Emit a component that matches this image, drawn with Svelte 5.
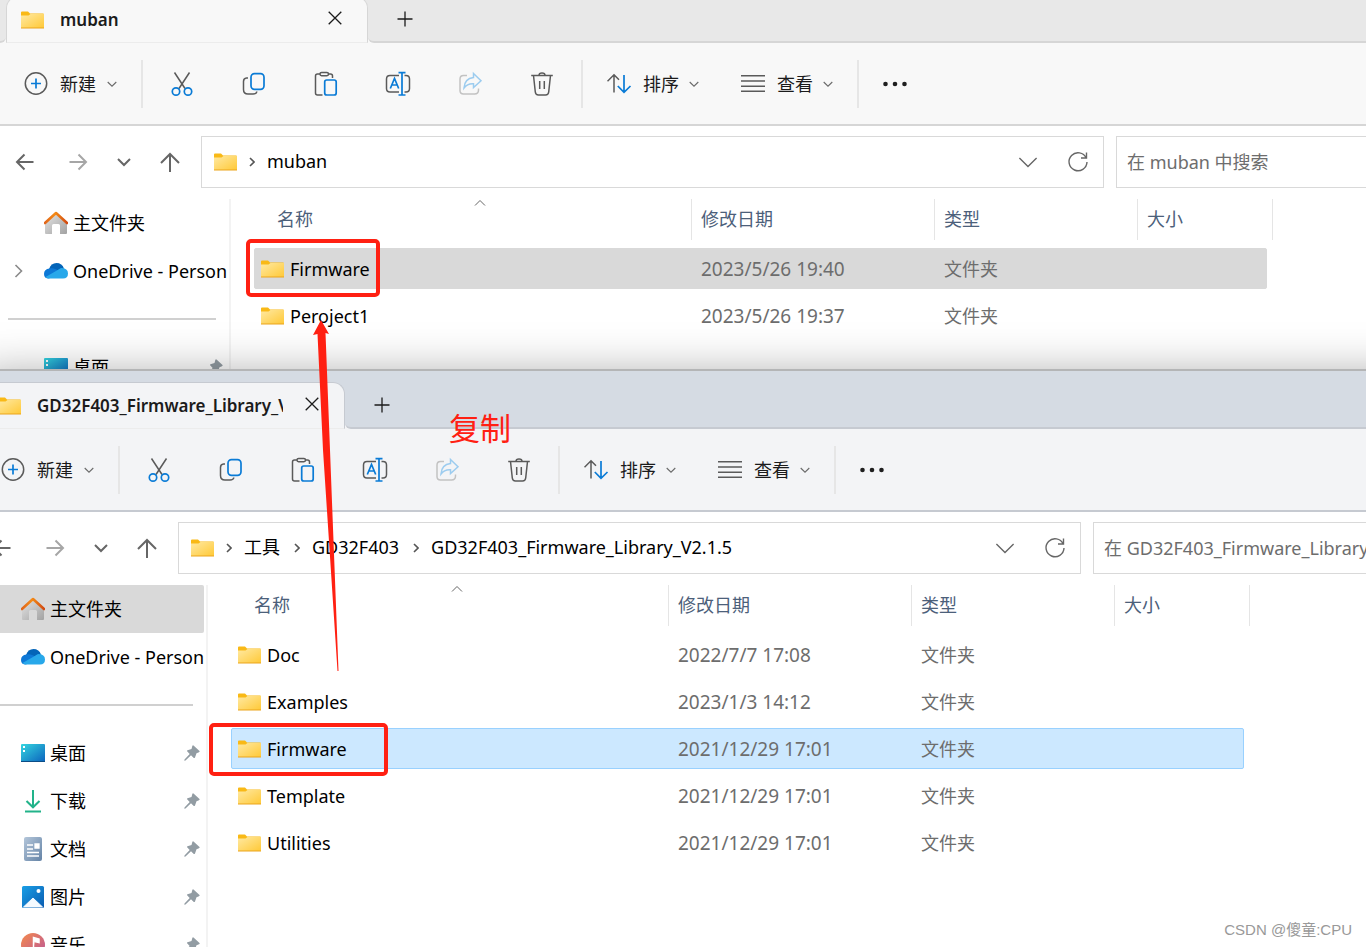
<script lang="ts">
  interface Entry {
    name: string;
    date: string;
    selected?: boolean;
  }

  interface Place {
    icon: string;
    label: string;
  }

  interface ExplorerWindow {
    id: string;
    title: string;
    crumbs: string[];
    search: string;
    active: boolean;
    places: Place[];
    entries: Entry[];
  }

  const pinned: Place[] = [
    { icon: 'desktop', label: '桌面' },
    { icon: 'download', label: '下载' },
    { icon: 'document', label: '文档' },
    { icon: 'picture', label: '图片' },
    { icon: 'music', label: '音乐' }
  ];

  const windows: ExplorerWindow[] = [
    {
      id: 'back',
      title: 'muban',
      crumbs: ['muban'],
      search: '在 muban 中搜索',
      active: false,
      places: pinned.slice(0, 1),
      entries: [
        { name: 'Firmware', date: '2023/5/26 19:40', selected: true },
        { name: 'Peroject1', date: '2023/5/26 19:37' }
      ]
    },
    {
      id: 'front',
      title: 'GD32F403_Firmware_Library_V2.1.5',
      crumbs: ['工具', 'GD32F403', 'GD32F403_Firmware_Library_V2.1.5'],
      search: '在 GD32F403_Firmware_Library_V2.1.5 中搜索',
      active: true,
      places: pinned,
      entries: [
        { name: 'Doc', date: '2022/7/7 17:08' },
        { name: 'Examples', date: '2023/1/3 14:12' },
        { name: 'Firmware', date: '2021/12/29 17:01', selected: true },
        { name: 'Template', date: '2021/12/29 17:01' },
        { name: 'Utilities', date: '2021/12/29 17:01' }
      ]
    }
  ];

  const tools = [
    { icon: 'cut', label: '剪切' },
    { icon: 'copy', label: '复制' },
    { icon: 'paste', label: '粘贴' },
    { icon: 'rename', label: '重命名' },
    { icon: 'share', label: '共享' },
    { icon: 'delete', label: '删除' }
  ];
</script>

{#snippet folder()}
  <svg class="folder" width="23" height="18" viewBox="0 0 23 18">
    <path d="M0 1.5Q0 .5 1 .5H7L9 2.5H22Q23 2.5 23 3.5V9H0z" fill="#f9b916" />
    <path d="M0 4.5H7.5L9.5 3H23V17H0z" fill="url(#folder-fill)" />
    <path d="M0 16.5H23V17.5H0z" fill="#eba51c" />
  </svg>
{/snippet}

{#snippet chevron(size: number)}
  <svg class="chevron" width={size} height={size} viewBox="0 0 10 10">
    <path d="M.7 3L5 7.2L9.3 3" />
  </svg>
{/snippet}

{#snippet toolIcon(name: string)}
  <svg class="tool-icon" width="26" height="26" viewBox="0 0 26 26">
    {#if name === 'new'}
      <circle cx="13" cy="12.5" r="10.7" />
      <path class="blue" d="M13 7.5V17.5M8 12.5H18" />
    {:else if name === 'cut'}
      <path d="M5.5 1.5L16 17.5M20.5 1.5L10 17.5" />
      <circle class="blue" cx="7" cy="20.5" r="3.7" />
      <circle class="blue" cx="19" cy="20.5" r="3.7" />
    {:else if name === 'copy'}
      <path d="M7 7H5.5Q2.5 7.3 2.5 10.5V18.5Q2.5 23 7 23H12Q15.5 23 15.8 20.5" />
      <rect class="blue" x="10" y="2.7" width="13" height="15.6" rx="3.5" />
    {:else if name === 'paste'}
      <path d="M7 3H4.5Q2.5 3 2.5 5V22Q2.5 24 4.5 24H9.5M16 3H17.5Q19.5 3 19.5 5V7" />
      <rect x="7" y="1.5" width="8.5" height="3.2" rx="1.6" />
      <rect class="blue" x="11.7" y="9" width="11.5" height="15" rx="2" />
    {:else if name === 'rename'}
      <path d="M14 4.5H5Q1.5 4.5 1.5 8V17.5Q1.5 21 5 21H14M19.5 4.5H21Q24.5 4.5 24.5 8V17.5Q24.5 21 21 21H19.5" />
      <path class="blue" d="M5.3 17.5L9.5 7.5L13.7 17.5M6.8 14H12.2M13.5 1.7H20.5M13.5 24H20.5M17 1.7V24" />
    {:else if name === 'share'}
      <path class="faint" d="M10 4.5H6.5Q3 4.5 3 8V19.5Q3 23 6.5 23H17.5Q21.5 23 21.5 19V17.5" />
      <path class="faint-blue" d="M16.5 2.5L24 9.7L16.5 16.5V12.7Q10.5 12.2 7 17Q7.5 7.5 16.5 6.5z" />
    {:else if name === 'delete'}
      <path d="M2.2 4.5H23.8M4.5 4.5L6.3 21Q6.6 24 9.5 24H16.5Q19.4 24 19.7 21L21.5 4.5M10 4.2Q10 2 13 2T16 4.2M10.7 10V18M15.3 10V18" />
    {:else if name === 'sort'}
      <path d="M7 21.5V4M.5 10.3L7 3.8L12 8.8" />
      <path class="blue" d="M17 4V21.3M10.8 15L17 21.3L23.5 15" />
    {:else if name === 'view'}
      <path d="M0 4.8H24M0 10.1H24M0 15.2H24M0 20.3H24" />
    {/if}
  </svg>
{/snippet}

{#snippet placeIcon(name: string)}
  <svg class="place-icon" width="24" height="24" viewBox="0 0 24 24">
    {#if name === 'home'}
      <path d="M1 12L12 3L23 12V22Q23 23 22 23H16V14.5Q16 13 14.5 13H9.5Q8 13 8 14.5V23H2Q1 23 1 22z" fill="url(#home-fill)" />
      <path d="M1 12L12 2L23 12" fill="none" stroke="url(#roof-fill)" stroke-width="2.6" stroke-linecap="round" stroke-linejoin="round" />
    {:else if name === 'onedrive'}
      <path d="M5 10Q7 4 12.5 4Q18 4 20 9.5L13 14L5 12z" fill="#0364b8" />
      <path d="M5.5 9.5Q0 10 0 15Q0 19.5 5 19.5L16 13Q11 8.5 5.5 9.5z" fill="#0d78d6" />
      <path d="M12 12L17 9Q24 9 24 14.5Q24 19.5 19 19.5H5Q3 19.5 1.5 18z" fill="#28a8ea" />
    {:else if name === 'desktop'}
      <path d="M1 3H23Q24 3 24 4V21H0V4Q0 3 1 3z" fill="url(#desktop-fill)" />
      <path d="M0 20H24V21H0z" fill="#0b4d86" />
      <path d="M2 5H4V7H2zM2 9H4V11H2z" fill="#fff" />
    {:else if name === 'download'}
      <path d="M12 1V18M5.5 12L12 18.3L18.5 12M4 22.5H20" fill="none" stroke="#22b38a" stroke-width="2" />
    {:else if name === 'document'}
      <rect x="3" y="0" width="18" height="24" rx="2" fill="url(#document-fill)" />
      <path d="M6 8H12M6 12H12M6 15.5H18M14 7H18V11H14zM6 19H18" fill="none" stroke="#fff" stroke-width="1.3" />
      <path d="M14 7H18V11H14z" fill="#fff" />
    {:else if name === 'picture'}
      <rect x="1" y="1" width="22" height="22" rx="1.5" fill="url(#picture-fill)" />
      <path d="M2.5 22L12 13L21.5 22z" fill="#f4faff" stroke="#f4faff" stroke-linejoin="round" />
      <circle cx="17.5" cy="6" r="2" fill="#fff" />
    {:else if name === 'music'}
      <circle cx="12" cy="12" r="12" fill="url(#music-fill)" />
      <path d="M12.5 17V4.5L18 6V9.5L13.5 8.5" fill="#fff" stroke="#fff" stroke-width="1.5" />
      <circle cx="11" cy="17" r="3" fill="#fff" />
    {/if}
  </svg>
{/snippet}

{#snippet explorer(win: ExplorerWindow)}
  <section class="window {win.id}" aria-label={win.title}>
    <header class="tab-strip">
      <div class="strip-edge"></div>
      <div class="tab">
        {@render folder()}
        <span class="tab-title">{win.title}</span>
        <button class="tab-close" aria-label="关闭标签页">
          <svg width="14" height="14" viewBox="0 0 14 14"><path d="M.7 .7L13.3 13.3M13.3 .7L.7 13.3" /></svg>
        </button>
      </div>
      <div class="strip-rest">
        <button class="tab-add" aria-label="添加新标签页">
          <svg width="16" height="16" viewBox="0 0 16 16"><path d="M8 .5V15.5M.5 8H15.5" /></svg>
        </button>
      </div>
    </header>

    <div class="commands">
      <button class="menu new">{@render toolIcon('new')}<span>新建</span>{@render chevron(10)}</button>
      <span class="divider"></span>
      {#each tools as tool}
        <button class="tool" aria-label={tool.label}>{@render toolIcon(tool.icon)}</button>
      {/each}
      <span class="divider"></span>
      <button class="menu">{@render toolIcon('sort')}<span>排序</span>{@render chevron(10)}</button>
      <button class="menu">{@render toolIcon('view')}<span>查看</span>{@render chevron(10)}</button>
      <span class="divider"></span>
      <button class="more" aria-label="更多">
        <svg class="dots" width="24" height="6" viewBox="0 0 24 6">
          <circle cx="2.5" cy="3" r="2.3" /><circle cx="12" cy="3" r="2.3" /><circle cx="21.5" cy="3" r="2.3" />
        </svg>
      </button>
    </div>

    <div class="nav">
      <div class="nav-buttons">
        <button aria-label="后退">
          <svg width="20" height="20" viewBox="0 0 20 20"><path d="M18.5 10H2M9.5 2.5L2 10L9.5 17.5" /></svg>
        </button>
        <button class="disabled" aria-label="前进">
          <svg width="20" height="20" viewBox="0 0 20 20"><path d="M1.5 10H18M10.5 2.5L18 10L10.5 17.5" /></svg>
        </button>
        <button aria-label="最近的位置">
          <svg width="20" height="20" viewBox="0 0 20 20"><path d="M4 7L10 13L16 7" /></svg>
        </button>
        <button aria-label="向上">
          <svg width="20" height="20" viewBox="0 0 20 20"><path d="M10 20V2M1 11L10 2L19 11" /></svg>
        </button>
      </div>
      <div class="address">
        {@render folder()}
        {#each win.crumbs as crumb}
          <svg class="crumb-arrow" width="6" height="10" viewBox="0 0 6 10"><path d="M1 1L5 5L1 9" /></svg>
          <a href="#{crumb}">{crumb}</a>
        {/each}
        <button class="history" aria-label="以前的位置">{@render chevron(20)}</button>
        <button aria-label="刷新">
          <svg width="22" height="22" viewBox="0 0 22 22"><path d="M19.2 7A9 9 0 1 0 20 11M19.5 1.5V7H14" /></svg>
        </button>
      </div>
      <input class="search" type="search" placeholder={win.search} aria-label="搜索" />
    </div>

    <div class="body">
      <nav class="places">
        <a class="place" class:current={win.active} href="#home">{@render placeIcon('home')}<span>主文件夹</span></a>
        <a class="place" href="#onedrive">
          <svg class="expander" width="10" height="14" viewBox="0 0 10 14"><path d="M1.5 1L7.5 7L1.5 13" /></svg>
          {@render placeIcon('onedrive')}<span>OneDrive - Personal</span>
        </a>
        <hr />
        {#each win.places as place}
          <a class="place" href="#{place.icon}">
            {@render placeIcon(place.icon)}<span>{place.label}</span>
            <svg class="pin" width="16" height="16" viewBox="0 0 16 16">
              <path d="M9.5 .5L15.5 6Q16 7 15 7.3L12.5 8.3L11 12.5Q10.5 13.5 9.5 12.7L7 10.2L1.5 15.5L.3 15.7L.5 14.5L5.7 9L3.3 6.5Q2.5 5.7 3.5 5.2L7.5 4L8.3 1Q8.7 0 9.5 .5z" />
            </svg>
          </a>
        {/each}
      </nav>

      <div class="files">
        <svg class="sorted" width="12" height="8" viewBox="0 0 12 8"><path d="M1 6.5L6 1.5L11 6.5" /></svg>
        <table>
          <thead>
            <tr><th>名称</th><th>修改日期</th><th>类型</th><th>大小</th></tr>
          </thead>
          <tbody>
            {#each win.entries as entry}
              <tr class:selected={entry.selected}>
                <td class="name">{@render folder()}{entry.name}</td>
                <td class="date">{entry.date}</td>
                <td>文件夹</td>
                <td></td>
              </tr>
            {/each}
          </tbody>
        </table>
      </div>
    </div>
  </section>
{/snippet}

<svg class="defs" width="0" height="0" aria-hidden="true">
  <defs>
    <linearGradient id="folder-fill" x1="0" y1="0" x2="1" y2="1"><stop stop-color="#ffe9a2" /><stop offset="1" stop-color="#ffc937" /></linearGradient>
    <linearGradient id="home-fill" x1="0" y1="0" x2="1" y2="1"><stop stop-color="#e3e3e3" /><stop offset="1" stop-color="#a2a2a2" /></linearGradient>
    <linearGradient id="roof-fill"><stop stop-color="#e0651b" /><stop offset=".45" stop-color="#f48b16" /><stop offset="1" stop-color="#d14a12" /></linearGradient>
    <linearGradient id="desktop-fill" x1="0" y1="0" x2="1" y2="1"><stop stop-color="#35d6e0" /><stop offset="1" stop-color="#0b62bd" /></linearGradient>
    <linearGradient id="document-fill" x1="0" y1="0" x2="1" y2="1"><stop stop-color="#b4c6da" /><stop offset="1" stop-color="#6483a6" /></linearGradient>
    <linearGradient id="picture-fill" x1="0" y1="0" x2="1" y2="1"><stop stop-color="#1a9fe6" /><stop offset="1" stop-color="#0a5bb0" /></linearGradient>
    <linearGradient id="music-fill" x1="0" y1="0" x2="1" y2="1"><stop stop-color="#f58a4b" /><stop offset="1" stop-color="#b9559c" /></linearGradient>
  </defs>
</svg>

<main class="desktop">
  {#each windows as win (win.id)}
    {@render explorer(win)}
  {/each}

  <div class="mark target"></div>
  <div class="mark source"></div>
  <svg class="arrow" width="30" height="352" viewBox="0 0 30 352">
    <path d="M9 0L17 14L13.5 13L18 130L26.5 351H25.5L11 130L5.5 14L1 15z" />
  </svg>
  <p class="note">复制</p>
  <p class="watermark">CSDN @傻童:CPU</p>
</main>

<style>
  :global(body) {
    margin: 0;
  }

  .defs {
    position: absolute;
  }

  .desktop {
    position: relative;
    height: 100vh;
    overflow: hidden;
    background: #fff;
    font-family: 'Noto Sans', 'Noto Sans CJK SC', sans-serif;
    font-size: 18px;
    line-height: 24px;
    color: #000;
  }

  svg {
    flex-shrink: 0;
    fill: none;
  }

  button {
    display: flex;
    align-items: center;
    justify-content: center;
    padding: 0;
    border: 0;
    background: none;
    color: inherit;
    font: inherit;
  }

  a {
    color: inherit;
    text-decoration: none;
  }

  /* Windows */
  .window {
    --chrome: #f8f8f8;
    --strip: #e8e8e8;
    --edge: #d6d6d6;
    --row: #d9d9d9;
    --row-edge: #d9d9d9;
    position: absolute;
    top: -15px;
    left: 0;
    display: flex;
    flex-direction: column;
    width: calc(100% + 83px);
    height: 100vh;
    background: #fff;
  }

  .window.front {
    --chrome: #f3f4f6;
    --strip: #d5dbe3;
    --edge: #c6cad1;
    --row: #cce8ff;
    --row-edge: #99d1ff;
    top: 371px;
    left: -23px;
    box-shadow: 0 0 0 2px #b4b5b6, 0 4px 44px rgba(0, 0, 0, 0.36);
  }

  .tab-strip {
    display: flex;
    flex-shrink: 0;
    height: 58px;
    background: linear-gradient(var(--strip) 50%, var(--chrome) 50%);
  }

  .strip-edge,
  .strip-rest {
    box-sizing: border-box;
    border-bottom: 2px solid var(--edge);
    background: var(--strip);
  }

  .strip-edge {
    width: 6px;
    border-bottom-right-radius: 6px;
  }

  .strip-rest {
    display: flex;
    flex: 1;
    padding: 18px 0 0 21px;
    border-bottom-left-radius: 6px;
  }

  .tab {
    display: flex;
    align-items: center;
    box-sizing: border-box;
    width: 362px;
    margin-top: 11px;
    padding: 0 25px 0 14px;
    border: 1px solid var(--edge);
    border-bottom-color: #ececec;
    border-radius: 12px 12px 0 0;
    background: var(--chrome);
  }

  .tab-title {
    width: 246px;
    margin-left: 16px;
    overflow: hidden;
    white-space: nowrap;
    font-size: 17px;
    font-weight: 600;
    color: #1b1b1b;
  }

  .tab-close {
    margin-left: auto;
    padding-bottom: 3px;
  }

  .tab-close svg,
  .tab-add svg {
    stroke: #1b1b1b;
    stroke-width: 1.3;
  }

  .tab-add {
    width: 32px;
    height: 32px;
  }

  /* Command bar */
  .commands {
    display: flex;
    flex-shrink: 0;
    align-items: center;
    height: 81px;
    padding-left: 2px;
    border-bottom: 2px solid var(--edge);
    background: var(--chrome);
    color: #1b1b1b;
  }

  .menu {
    gap: 10px;
    height: 48px;
    padding: 0 21px;
  }

  .new {
    gap: 11px;
  }

  .tool {
    width: 72px;
    height: 48px;
  }

  .more {
    width: 66px;
    height: 48px;
  }

  .divider {
    width: 2px;
    height: 48px;
    margin: 0 3px;
    background: #e6e6e6;
  }

  .dots {
    fill: #1f1f1f;
  }

  .tool-icon {
    stroke: #5a5a5a;
    stroke-width: 1.5;
  }

  .tool-icon .blue {
    stroke: #0a7bd6;
    stroke-width: 1.7;
  }

  .tool-icon .faint {
    stroke: #c2c2c2;
  }

  .tool-icon .faint-blue {
    stroke: #9cccef;
  }

  .chevron {
    stroke: #6a6a6a;
    stroke-width: 1.1;
  }

  /* Navigation row */
  .nav {
    display: flex;
    flex-shrink: 0;
    gap: 12px;
    padding: 10px 12px 11px 15px;
  }

  .nav-buttons {
    display: flex;
    gap: 26px;
    width: 174px;
  }

  .nav-buttons svg {
    stroke: #666;
    stroke-width: 2;
  }

  .nav-buttons .disabled {
    margin-left: 7px;
  }

  .nav-buttons .disabled svg {
    stroke: #a6a6a6;
  }

  .address {
    display: flex;
    flex: 1;
    align-items: center;
    gap: 12px;
    height: 50px;
    padding: 0 14px 0 12px;
    border: 1px solid #d9d9d9;
  }

  .address a {
    padding-bottom: 2px;
  }

  .address button {
    width: 22px;
    height: 48px;
  }

  .address .history {
    margin: 0 16px 0 auto;
  }

  .address button svg {
    stroke: #666;
    stroke-width: 1.4;
  }

  .address .history svg {
    stroke-width: 0.7;
  }

  .crumb-arrow {
    stroke: #555;
    stroke-width: 1.6;
  }

  a + .crumb-arrow {
    margin-left: 2px;
  }

  .search {
    box-sizing: border-box;
    width: 321px;
    height: 52px;
    padding: 0 10px;
    border: 1px solid #d9d9d9;
    border-radius: 0;
    background: #fff;
    font: inherit;
  }

  .search::placeholder {
    color: #6d6d6d;
    opacity: 1;
  }

  /* Side pane and file list */
  .body {
    display: flex;
    flex: 1;
  }

  .places {
    width: 229px;
    border-right: 2px solid #f3f3f3;
  }

  .place {
    position: relative;
    display: flex;
    align-items: center;
    gap: 5px;
    height: 48px;
    margin-right: 2px;
    padding-left: 44px;
    overflow: hidden;
    border-radius: 2px;
    white-space: nowrap;
  }

  .place.current {
    background: #d9d9d9;
  }

  .expander {
    position: absolute;
    left: 14px;
    stroke: #8a8a8a;
    stroke-width: 1.6;
  }

  .pin {
    position: absolute;
    right: 4px;
    fill: #929ca3;
  }

  hr {
    height: 2px;
    margin: 23px 13px 23px 8px;
    border: 0;
    background: #d0d0d0;
  }

  .files {
    position: relative;
    padding-left: 23px;
  }

  .sorted {
    position: absolute;
    top: 0;
    left: 243px;
    stroke: #666;
  }

  table,
  thead,
  tbody {
    display: block;
  }

  tr {
    display: grid;
    grid-template-columns: 438px 243px 203px 1fr;
    width: 1019px;
  }

  th {
    padding: 8px 0 9px 9px;
    border-right: 1px solid #e5e5e5;
    text-align: left;
    font-weight: 400;
    color: #4c607a;
  }

  th:first-child {
    padding-left: 23px;
  }

  tbody {
    padding-top: 8px;
  }

  tbody tr {
    box-sizing: border-box;
    grid-template-columns: 437px 243px 203px 1fr;
    width: 1013px;
    height: 41px;
    margin-bottom: 6px;
    border: 1px solid transparent;
    border-radius: 2px;
  }

  tr.selected {
    border-color: var(--row-edge);
    background: var(--row);
  }

  td {
    padding: 8px 0 7px 9px;
    color: #6d6d6d;
  }

  td.name {
    display: flex;
    align-items: center;
    gap: 6px;
    padding-left: 6px;
    color: #000;
  }

  td.date {
    font-size: 19px;
  }

  /* Annotations */
  .mark {
    position: absolute;
    box-sizing: border-box;
    border: 4px solid #ff2012;
    border-radius: 5px;
  }

  .target {
    top: 239px;
    left: 246px;
    width: 134px;
    height: 58px;
  }

  .source {
    top: 723px;
    left: 209px;
    width: 179px;
    height: 53px;
  }

  .arrow {
    position: absolute;
    top: 320px;
    left: 312px;
    fill: #ff2012;
  }

  .note {
    position: absolute;
    top: 408px;
    left: 449px;
    margin: 0;
    font-size: 31px;
    line-height: 40px;
    color: #ff2012;
  }

  .watermark {
    position: absolute;
    right: 14px;
    bottom: 5px;
    margin: 0;
    font-family: 'Liberation Sans', 'Noto Sans CJK SC', sans-serif;
    font-size: 15px;
    color: #999;
  }
</style>
